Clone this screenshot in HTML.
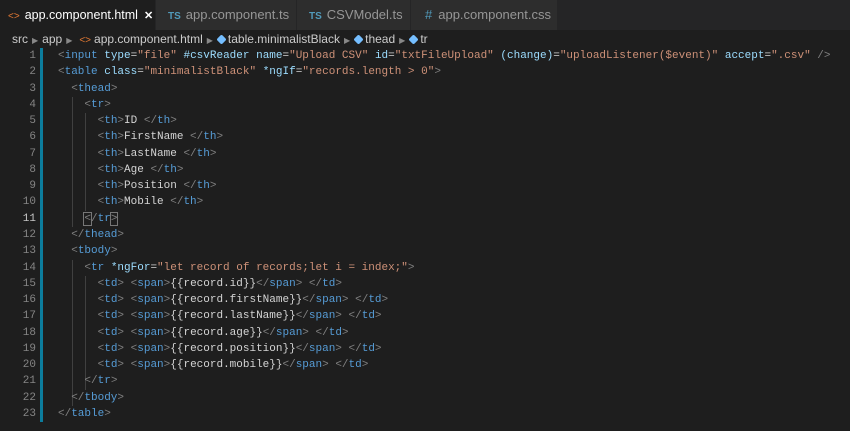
<!DOCTYPE html>
<html><head><meta charset="utf-8"><style>
body{margin:0;width:850px;height:431px;background:#1e1e1e;overflow:hidden;font-family:"Liberation Sans",sans-serif;}
.tabs{position:absolute;top:0;left:0;width:850px;height:30px;background:#252526;}
.tab{position:absolute;top:0;height:30px;background:#2d2d2d;color:#969696;font-size:13px;line-height:30px;box-sizing:border-box;padding-left:10px;border-right:1px solid #252526;white-space:nowrap;overflow:hidden;}
.tab.a{background:#1e1e1e;color:#fff;padding-left:8px;font-size:12.5px;}
.ts{color:#519aba;font-size:10px;font-weight:bold;margin-right:5px;}
.bc{position:absolute;top:30px;left:0;height:18px;width:850px;color:#ccc;font-size:12px;line-height:18px;padding-left:12px;white-space:nowrap;}
.bc .sp{color:#888;font-size:8px;margin:0 4px;}
.cube{display:inline-block;width:9px;height:9px;background:#75beff;border-radius:2px;transform:rotate(45deg) scale(.8);margin-right:2px;vertical-align:-1px;}
.code{position:absolute;top:48px;left:0;font-family:"Liberation Mono",monospace;font-size:11px;}
.ln{position:absolute;left:0;width:36px;text-align:right;color:#858585;}
.l{position:absolute;left:58px;white-space:pre;color:#d4d4d4;height:16.27px;line-height:16.27px;}
.b{color:#808080}.t{color:#569cd6}.at{color:#9cdcfe}.s{color:#ce9178}
.bar{position:absolute;left:40px;top:48px;width:3px;height:374px;background:#0c7d9d;}
.g{position:absolute;width:1px;background:#404040;}
</style></head><body>
<div class="tabs">
<div class="tab a" style="left:0;width:156px"><span style="color:#e37933;font-size:10px;margin-right:5px">&lt;&gt;</span>app.component.html<span style="margin-left:6px;font-size:11px;font-weight:bold">✕</span></div>
<div class="tab" style="left:156px;width:141px;padding-left:12px"><span class="ts">TS</span>app.component.ts</div>
<div class="tab" style="left:297px;width:114px;padding-left:12px"><span class="ts">TS</span>CSVModel.ts</div>
<div class="tab" style="left:411px;width:147px;padding-left:14px"><span style="color:#519aba;margin-right:6px">#</span>app.component.css</div>
</div>
<div class="bc">src<span class="sp">▶</span>app<span class="sp">▶</span><span style="color:#e37933;font-size:10px;margin:0 3px">&lt;&gt;</span>app.component.html<span class="sp">▶</span><span class="cube"></span>table.minimalistBlack<span class="sp">▶</span><span class="cube"></span>thead<span class="sp">▶</span><span class="cube"></span>tr</div>
<div class="bar"></div>
<div class="g" style="left:72px;top:97px;height:130px"></div>
<div class="g" style="left:85px;top:113px;height:98px"></div>
<div class="g" style="left:72px;top:260px;height:146px"></div>
<div class="g" style="left:85px;top:276px;height:114px"></div>
<div class="code">
<script>
var L=[
'<b>&lt;</b><t>input</t> <a>type</a>=<s>"file"</s> <a>#csvReader</a> <a>name</a>=<s>"Upload CSV"</s> <a>id</a>=<s>"txtFileUpload"</s> <a>(change)</a>=<s>"uploadListener($event)"</s> <a>accept</a>=<s>".csv"</s> <b>/&gt;</b>',
'<b>&lt;</b><t>table</t> <a>class</a>=<s>"minimalistBlack"</s> <a>*ngIf</a>=<s>"records.length &gt; 0"</s><b>&gt;</b>',
'  <b>&lt;</b><t>thead</t><b>&gt;</b>',
'    <b>&lt;</b><t>tr</t><b>&gt;</b>',
'      <b>&lt;</b><t>th</t><b>&gt;</b>ID <b>&lt;/</b><t>th</t><b>&gt;</b>',
'      <b>&lt;</b><t>th</t><b>&gt;</b>FirstName <b>&lt;/</b><t>th</t><b>&gt;</b>',
'      <b>&lt;</b><t>th</t><b>&gt;</b>LastName <b>&lt;/</b><t>th</t><b>&gt;</b>',
'      <b>&lt;</b><t>th</t><b>&gt;</b>Age <b>&lt;/</b><t>th</t><b>&gt;</b>',
'      <b>&lt;</b><t>th</t><b>&gt;</b>Position <b>&lt;/</b><t>th</t><b>&gt;</b>',
'      <b>&lt;</b><t>th</t><b>&gt;</b>Mobile <b>&lt;/</b><t>th</t><b>&gt;</b>',
'    <b style="outline:1px solid #777">&lt;</b><b>/</b><t>tr</t><b style="outline:1px solid #777">&gt;</b>',
'  <b>&lt;/</b><t>thead</t><b>&gt;</b>',
'  <b>&lt;</b><t>tbody</t><b>&gt;</b>',
'    <b>&lt;</b><t>tr</t> <a>*ngFor</a>=<s>"let record of records;let i = index;"</s><b>&gt;</b>'
];
var f=['id','firstName','lastName','age','position','mobile'];
f.forEach(function(x){L.push('      <b>&lt;</b><t>td</t><b>&gt;</b> <b>&lt;</b><t>span</t><b>&gt;</b>{{record.'+x+'}}<b>&lt;/</b><t>span</t><b>&gt;</b> <b>&lt;/</b><t>td</t><b>&gt;</b>');});
L.push('    <b>&lt;/</b><t>tr</t><b>&gt;</b>','  <b>&lt;/</b><t>tbody</t><b>&gt;</b>','<b>&lt;/</b><t>table</t><b>&gt;</b>');
var h='';
L.forEach(function(s,i){
 s=s.replace(/<b( [^>]*)?>/g,function(m,a){return '<span class="b"'+(a||'')+'>';}).replace(/<\/b>/g,'</span>')
 .replace(/<t>/g,'<span class="t">').replace(/<\/t>/g,'</span>')
 .replace(/<a>/g,'<span class="at">').replace(/<\/a>/g,'</span>')
 .replace(/<s>/g,'<span class="s">').replace(/<\/s>/g,'</span>');
 var y=(i*16.27).toFixed(2);
 h+='<div class="ln" style="top:'+y+'px;line-height:16.27px;'+(i==10?'color:#c6c6c6':'')+'">'+(i+1)+'</div><div class="l" style="top:'+y+'px">'+s+'</div>';
});
document.write(h);
</script>
</div>
</body></html>
